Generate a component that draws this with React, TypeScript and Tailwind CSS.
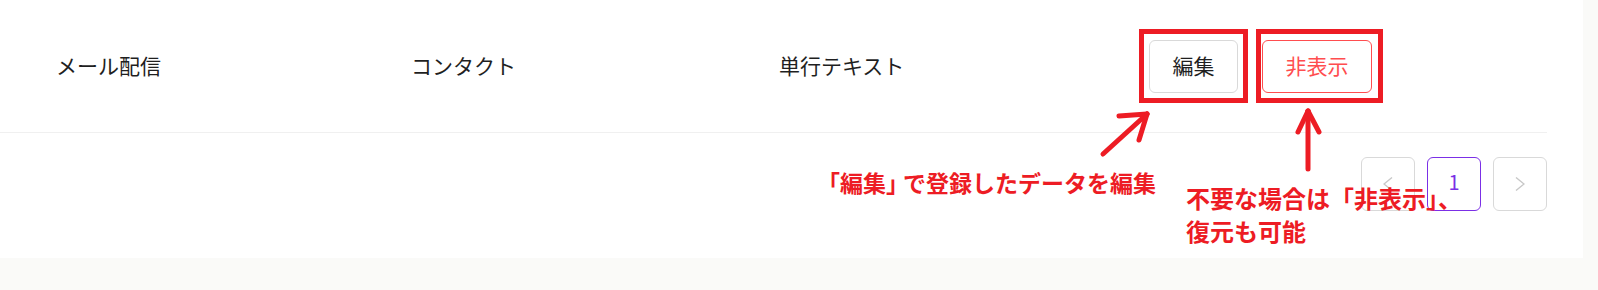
import React from "react";

const FONT = { fontFamily: '"Noto Sans CJK JP", "Noto Sans", sans-serif' };

export default function App() {
  return (
    <div
      className="relative w-[1598px] h-[290px] overflow-hidden bg-[#fafaf8]"
      style={FONT}
    >
      <div className="w-[1583px] h-[258px] bg-white pr-[36px]">
        <div className="flex w-[1547px] h-[133px] items-center border-b border-[#f0f0f0] text-[21px] text-[#1f1f1f]">
          <div className="w-[411px] pl-[56px]">メール配信</div>
          <div className="w-[368px]">コンタクト</div>
          <div className="w-[370px]">単行テキスト</div>
          <div className="flex items-center gap-[24px]">
            <button className="flex h-[53px] w-[89px] items-center justify-center rounded-[6px] border border-[#d9d9d9] bg-white text-[21px] text-[#1f1f1f]">
              編集
            </button>
            <button className="flex h-[53px] w-[110px] items-center justify-center rounded-[6px] border border-[#ff4d4f] bg-white text-[21px] text-[#ff4d4f]">
              非表示
            </button>
          </div>
        </div>
        <div className="mt-[24px] flex w-[1547px] justify-end gap-[12px]">
          <div className="flex h-[54px] w-[54px] items-center justify-center rounded-[6px] border border-[#d9d9d9]">
            <svg width="10" height="14" viewBox="0 0 10 14" fill="none">
              <polyline points="9,0.5 1,7 9,13.5" stroke="#c8c8c8" strokeWidth="1.4" />
            </svg>
          </div>
          <div className="flex h-[54px] w-[54px] items-center justify-center rounded-[6px] border border-[#7b2fe6] pb-[4px] text-[20px] text-[#7b2fe6]">
            1
          </div>
          <div className="flex h-[54px] w-[54px] items-center justify-center rounded-[6px] border border-[#d9d9d9]">
            <svg width="10" height="14" viewBox="0 0 10 14" fill="none">
              <polyline points="1,0.5 9,7 1,13.5" stroke="#c8c8c8" strokeWidth="1.4" />
            </svg>
          </div>
        </div>
      </div>

      {/* Annotation boxes */}
      <div className="pointer-events-none absolute left-[1139px] top-[29px] h-[74px] w-[109px] border-[5px] border-[#ed1c24]" />
      <div className="pointer-events-none absolute left-[1256px] top-[29px] h-[74px] w-[127px] border-[5px] border-[#ed1c24]" />

      {/* Annotation arrows */}
      <svg
        className="pointer-events-none absolute left-0 top-0"
        width="1598"
        height="290"
        viewBox="0 0 1598 290"
        fill="none"
      >
        <g stroke="#ed1c24" strokeWidth="5" strokeLinecap="round" strokeLinejoin="round">
          <line x1="1103" y1="154" x2="1147" y2="114" />
          <line x1="1147" y1="114" x2="1119" y2="116" />
          <line x1="1147" y1="114" x2="1139" y2="140" />
          <line x1="1308" y1="169" x2="1308" y2="111" />
          <line x1="1308" y1="111" x2="1298" y2="132" />
          <line x1="1308" y1="111" x2="1319" y2="132" />
        </g>
      </svg>

      {/* Annotation texts */}
      <div className="pointer-events-none absolute left-[817px] top-[170px] whitespace-nowrap text-[23px] leading-[24px] font-bold text-[#ed1c24]">
        「編集<span className="tracking-[-6px]">」</span>で登録したデータを編集
      </div>
      <div className="pointer-events-none absolute left-[1186px] top-[181px] whitespace-nowrap text-[24px] leading-[33px] font-bold text-[#ed1c24]">
        不要な場合は「非表示」、
        <br />
        復元も可能
      </div>
    </div>
  );
}
